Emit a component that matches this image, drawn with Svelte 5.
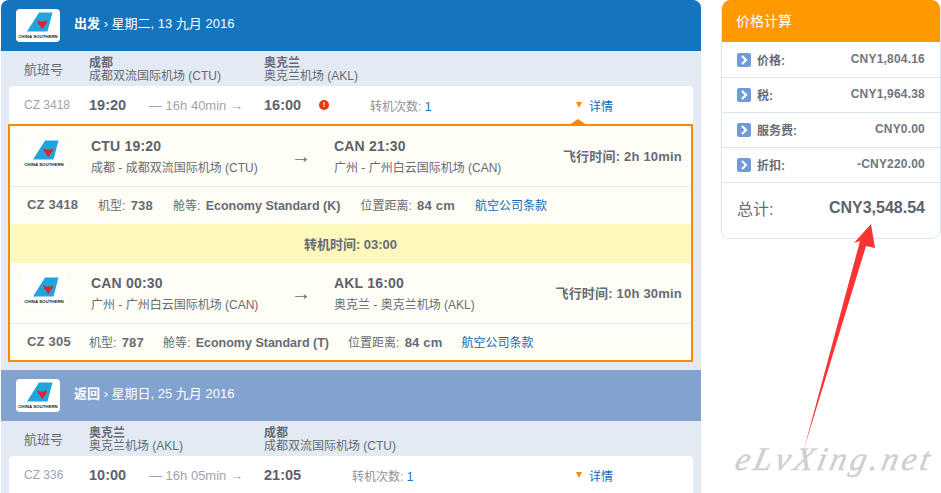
<script>
  const prices = [
    ['价格:', 'CNY1,804.16'],
    ['税:', 'CNY1,964.38'],
    ['服务费:', 'CNY0.00'],
    ['折扣:', '-CNY220.00']
  ];
</script>

{#snippet logo()}
  <svg class="logo" width="44" height="33" viewBox="0 0 44 33" aria-hidden="true">
    <path d="M11 22.500 L23 3.500 H36.500 L31.500 22.500 Z" fill="#1fa5dc" />
    <path d="M21.500 11 l2.500 1.500 h4.500 l2.500 -1.500 l-0.500 3.500 l-2 2 l-1.500 3 h-1.500 l-1.500 -3 l-2 -2 Z" fill="#d8262e" />
    <text x="22" y="29" text-anchor="middle" class="logotext">CHINA SOUTHERN</text>
  </svg>
{/snippet}

<div class="page">
  <main class="left">
    <header class="bar out">
      <span class="logobox">{@render logo()}</span>
      <span class="bartext"><b>出发</b> › 星期二, 13 九月 2016</span>
    </header>
    <div class="cols">
      <span class="c1">航班号</span>
      <span class="c2"><b>成都</b><i>成都双流国际机场 (CTU)</i></span>
      <span class="c3"><b>奥克兰</b><i>奥克兰机场 (AKL)</i></span>
    </div>
    <div class="row first">
      <span class="c1 code">CZ 3418</span>
      <b class="time t1">19:20</b>
      <span class="dur">— 16h 40min →</span>
      <b class="time t2">16:00</b>
      <span class="alert">!</span>
      <span class="stops">转机次数: <em>1</em></span>
      <span class="det"><i class="tri"></i><a href="#a">详情</a></span>
      <i class="up"></i>
    </div>

    <section class="box">
      <div class="seg">
        <span class="seglogo">{@render logo()}</span>
        <div class="pt p1"><b>CTU 19:20</b><span>成都 - 成都双流国际机场 (CTU)</span></div>
        <span class="arr">→</span>
        <div class="pt"><b>CAN 21:30</b><span>广州 - 广州白云国际机场 (CAN)</span></div>
        <span class="fly"><b>飞行时间: 2h 10min</b></span>
      </div>
      <div class="info">
        <b class="cz">CZ 3418</b>
        <span>机型: <b>738</b></span>
        <span>舱等: <b class="econ">Economy Standard (K)</b></span>
        <span>位置距离: <b>84 cm</b></span>
        <a href="#a">航空公司条款</a>
      </div>
      <div class="transfer"><b>转机时间: 03:00</b></div>
      <div class="seg">
        <span class="seglogo">{@render logo()}</span>
        <div class="pt p1"><b>CAN 00:30</b><span>广州 - 广州白云国际机场 (CAN)</span></div>
        <span class="arr">→</span>
        <div class="pt"><b>AKL 16:00</b><span>奥克兰 - 奥克兰机场 (AKL)</span></div>
        <span class="fly"><b>飞行时间: 10h 30min</b></span>
      </div>
      <div class="info last">
        <b class="cz">CZ 305</b>
        <span>机型: <b>787</b></span>
        <span>舱等: <b class="econ">Economy Standard (T)</b></span>
        <span>位置距离: <b>84 cm</b></span>
        <a href="#a">航空公司条款</a>
      </div>
    </section>

    <header class="bar ret">
      <span class="logobox">{@render logo()}</span>
      <span class="bartext"><b>返回</b> › 星期日, 25 九月 2016</span>
    </header>
    <div class="cols">
      <span class="c1">航班号</span>
      <span class="c2"><b>奥克兰</b><i>奥克兰机场 (AKL)</i></span>
      <span class="c3"><b>成都</b><i>成都双流国际机场 (CTU)</i></span>
    </div>
    <div class="row">
      <span class="c1 code">CZ 336</span>
      <b class="time t1">10:00</b>
      <span class="dur">— 16h 05min →</span>
      <b class="time t2">21:05</b>
      <span class="stops back">转机次数: <em>1</em></span>
      <span class="det"><i class="tri"></i><a href="#a">详情</a></span>
    </div>
  </main>

  <aside class="side">
    <h2>价格计算</h2>
    <ul>
      {#each prices as p}
        <li>
          <span class="chev">
            <svg width="8" height="10" viewBox="0 0 8 10" aria-hidden="true"><path d="M2 1 L6 5 L2 9" fill="none" stroke="#fff" stroke-width="2.200" /></svg>
          </span>
          <b class="lab">{p[0]}</b>
          <b class="val">{p[1]}</b>
        </li>
      {/each}
    </ul>
    <div class="total"><span>总计:</span><b>CNY3,548.54</b></div>
  </aside>

  <svg class="pointer" width="90" height="240" viewBox="0 0 90 240" aria-hidden="true">
    <path d="M72 2 L76 26 L67 24 L5 227 L61 19 L55 21 Z" fill="#fd3333" />
  </svg>
  <div class="mark">eLvXing.net</div>
</div>

<style>
  :global(body) { margin: 0; background: #fff; }
  .page {
    position: relative;
    width: 941px;
    height: 493px;
    overflow: hidden;
    display: flex;
    align-items: flex-start;
    padding-left: 1px;
    box-sizing: border-box;
    font: 13px "Liberation Sans", "Noto Sans CJK SC", sans-serif;
    color: #666b75;
  }
  .left {
    width: 700px;
    height: 493px;
    flex: none;
    background: #e3eaf4;
    border-radius: 8px 8px 0 0;
  }
  .side {
    width: 220px;
    margin-left: 20px;
    flex: none;
    box-sizing: border-box;
    border: 1px solid #dae6f1;
    border-top: 0;
    border-radius: 9px;
    overflow: hidden;
  }
  .bar {
    height: 51px;
    display: flex;
    align-items: center;
    padding-left: 15px;
    color: #fff;
    font-size: 13px;
  }
  .out { background: #1474bd; border-radius: 8px 8px 0 0; }
  .ret { background: #82a2d0; }
  .logobox {
    width: 44px;
    height: 33px;
    background: #fff;
    border-radius: 4px;
    display: block;
    margin-right: 14px;
  }
  .logo { display: block; }
  .logotext { font: bold 4.400px "Liberation Sans", sans-serif; fill: #222; }
  .bartext { line-height: 16px; padding-bottom: 4px; }
  .cols {
    height: 35px;
    display: flex;
    align-items: center;
    position: relative;
    font-size: 13px;
    color: #666b75;
  }
  .c1 { width: 88px; padding-left: 23px; box-sizing: border-box; flex: none; }
  .c2, .c3 { display: flex; flex-direction: column; line-height: 12px; font-size: 12px; }
  .c2 { width: 175px; flex: none; padding-top: 1px; }
  .c3 { flex: none; padding-top: 1px; }
  .c2 i, .c3 i { font-style: normal; margin-top: 1px; }
  .row {
    height: 38px;
    margin: 0 8px;
    background: #fff;
    border-radius: 4px 4px 0 0;
    display: flex;
    align-items: center;
    position: relative;
  }
  .row .c1 { width: 80px; padding-left: 15px; }
  .code { color: #a1a4aa; font-size: 12px; }
  .time { font-size: 14.500px; color: #5d626d; flex: none; }
  .t1 { width: 60px; }
  .dur { width: 115px; flex: none; color: #a1a4aa; font-size: 13px; }
  .t2 { width: 55px; }
  .alert {
    width: 10px;
    height: 10px;
    border-radius: 50%;
    background: #e8360e;
    color: #fff;
    font: bold 8px/10px "Liberation Sans", sans-serif;
    text-align: center;
    flex: none;
  }
  .stops { margin-left: 41px; width: 206px; flex: none; color: #8f9298; font-size: 12px; }
  .stops.back { margin-left: 33px; width: 224px; }
  .stops em { font-style: normal; color: #1474bd; }
  .det { display: flex; align-items: center; gap: 7px; font-size: 12px; }
  a { color: #0a6ab8; text-decoration: none; }
  .tri {
    width: 0;
    height: 0;
    border: 3.500px solid transparent;
    border-top: 6px solid #ff8a00;
    border-bottom: 0;
  }
  .up {
    position: absolute;
    right: 106px;
    bottom: -1px;
    width: 0;
    height: 0;
    border: 9px solid transparent;
    border-bottom: 6px solid #ff8a00;
    border-top: 0;
  }
  .box {
    margin: 0 8px 8px 7px;
    height: 238px;
    box-sizing: border-box;
    border: 2px solid #ff8a00;
    background: #fffef6;
  }
  .seg {
    height: 60px;
    display: flex;
    align-items: center;
    border-bottom: 1px solid #e3eaf4;
  }
  .seglogo { width: 44px; height: 33px; margin: 11px 0 0 12px; align-self: flex-start; background: #fff; flex: none; }
  .pt { display: flex; flex-direction: column; gap: 4px; font-size: 12px; }
  .pt b { font-size: 14px; letter-spacing: .2px; color: #5d626d; }
  .p1 { width: 187px; margin-left: 25px; flex: none; }
  .arr { width: 56px; padding-left: 13px; box-sizing: border-box; flex: none; font-size: 20px; color: #666b75; }
  .fly { margin-left: auto; padding-right: 9px; font-size: 13px; letter-spacing: .2px; padding-bottom: 2px; }
  .info {
    height: 37px;
    display: flex;
    align-items: center;
    padding-left: 17px;
    gap: 20px;
    font-size: 12px;
    padding-bottom: 2px;
    box-sizing: border-box;
    white-space: nowrap;
  }
  .info b { font-size: 13px; letter-spacing: .2px; margin-left: 2px; }
  .info .econ { font-size: 12.500px; letter-spacing: 0; }
  .info .cz { margin-left: 0; width: 51px; flex: none; }
  .info.last { gap: 19px; }
  .info.last .cz { width: 43px; }
  .transfer {
    height: 39px;
    background: #fff8bc;
    display: flex;
    align-items: center;
    justify-content: center;
    font-size: 13px;
  }
  h2 {
    margin: 0;
    height: 42px;
    box-sizing: border-box;
    background: #ff9900;
    color: #fff;
    font-size: 14px;
    font-weight: 400;
    line-height: 42px;
    padding-left: 14px;
  }
  ul { list-style: none; margin: 0; padding: 1px 0 0; }
  li {
    height: 35px;
    box-sizing: border-box;
    border-bottom: 1px solid #dae6f1;
    display: flex;
    align-items: center;
    padding: 0 15px;
    font-size: 12px;
  }
  .chev {
    width: 14px;
    height: 14px;
    background: #6f9bd6;
    border-radius: 2px;
    display: flex;
    align-items: center;
    justify-content: center;
    margin-right: 6px;
  }
  .val { margin-left: auto; color: #71767f; letter-spacing: .2px; position: relative; top: -1px; }
  .lab { color: #666b75; position: relative; top: -1px; }
  .total {
    height: 55px;
    display: flex;
    align-items: center;
    justify-content: space-between;
    box-sizing: border-box;
    padding: 0 15px 6px;
    font-size: 16px;
  }
  .total b { font-size: 16px; color: #5d626d; }
  .pointer { position: absolute; left: 799px; top: 222px; }
  .mark {
    position: absolute;
    left: 736px;
    top: 441px;
    font: italic 33px "Liberation Serif", serif;
    letter-spacing: 3.500px;
    color: #cfcfcf;
    -webkit-text-stroke: .4px #cfcfcf;
    transform: skewX(-12deg);
  }
</style>
